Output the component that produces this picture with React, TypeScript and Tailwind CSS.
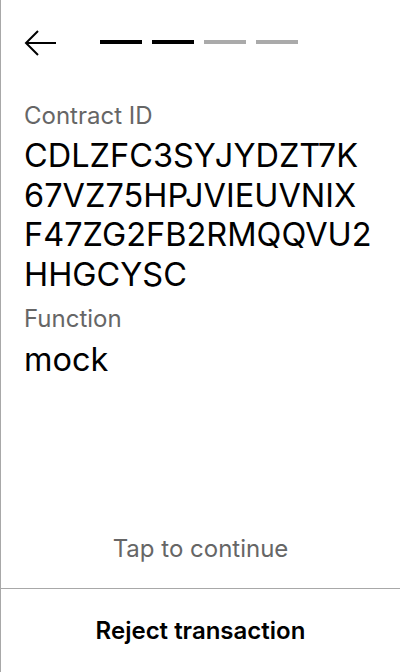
import React from "react";

const STEPS = [true, true, false, false];

const CONTRACT_ID = "CDLZFC3SYJYDZT7K67VZ75HPJVIEUVNIXF47ZG2FB2RMQQVU2HHGCYSC";

function BackArrow() {
  return (
    <svg width="32" height="26" viewBox="0 0 32 26" fill="none" stroke="#000" strokeWidth="2">
      <path d="M32 13H2" />
      <path d="M14 1L2 13l12 12" />
    </svg>
  );
}

export default function App() {
  return (
    <div
      className="w-[400px] h-[672px] flex flex-col bg-white border-l border-[#a8a8a8] text-black"
      style={{ fontFamily: "Inter, 'Noto Sans', sans-serif" }}
    >
      {/* Header */}
      <div className="flex items-center pl-[23px] pt-[30px] h-[56px]">
        <BackArrow />
        <div className="flex gap-[10px] ml-[44px] -mt-[2px]">
          {STEPS.map((done, i) => (
            <div key={i} className={done ? "w-[42px] h-[4px] bg-black" : "w-[42px] h-[4px] bg-[#aaaaaa]"} />
          ))}
        </div>
      </div>

      {/* Details */}
      <div className="flex-1 pl-[23px] pr-[25px] pt-[44px]">
        <div className="text-[24px] leading-[32px] text-[#666666]">Contract ID</div>
        <div className="mt-1 text-[32.5px] leading-[39.5px] break-all">{CONTRACT_ID}</div>
        <div className="mt-[9px] text-[24px] leading-[32px] text-[#666666]">Function</div>
        <div className="mt-[5px] text-[32.5px] leading-[39.5px]">mock</div>
      </div>

      {/* Footer */}
      <div className="text-center text-[24px] leading-[32px] text-[#666666] pb-[23px]">Tap to continue</div>
      <button className="h-[84px] border-t border-[#a8a8a8] text-[24px] font-semibold">
        Reject transaction
      </button>
    </div>
  );
}
